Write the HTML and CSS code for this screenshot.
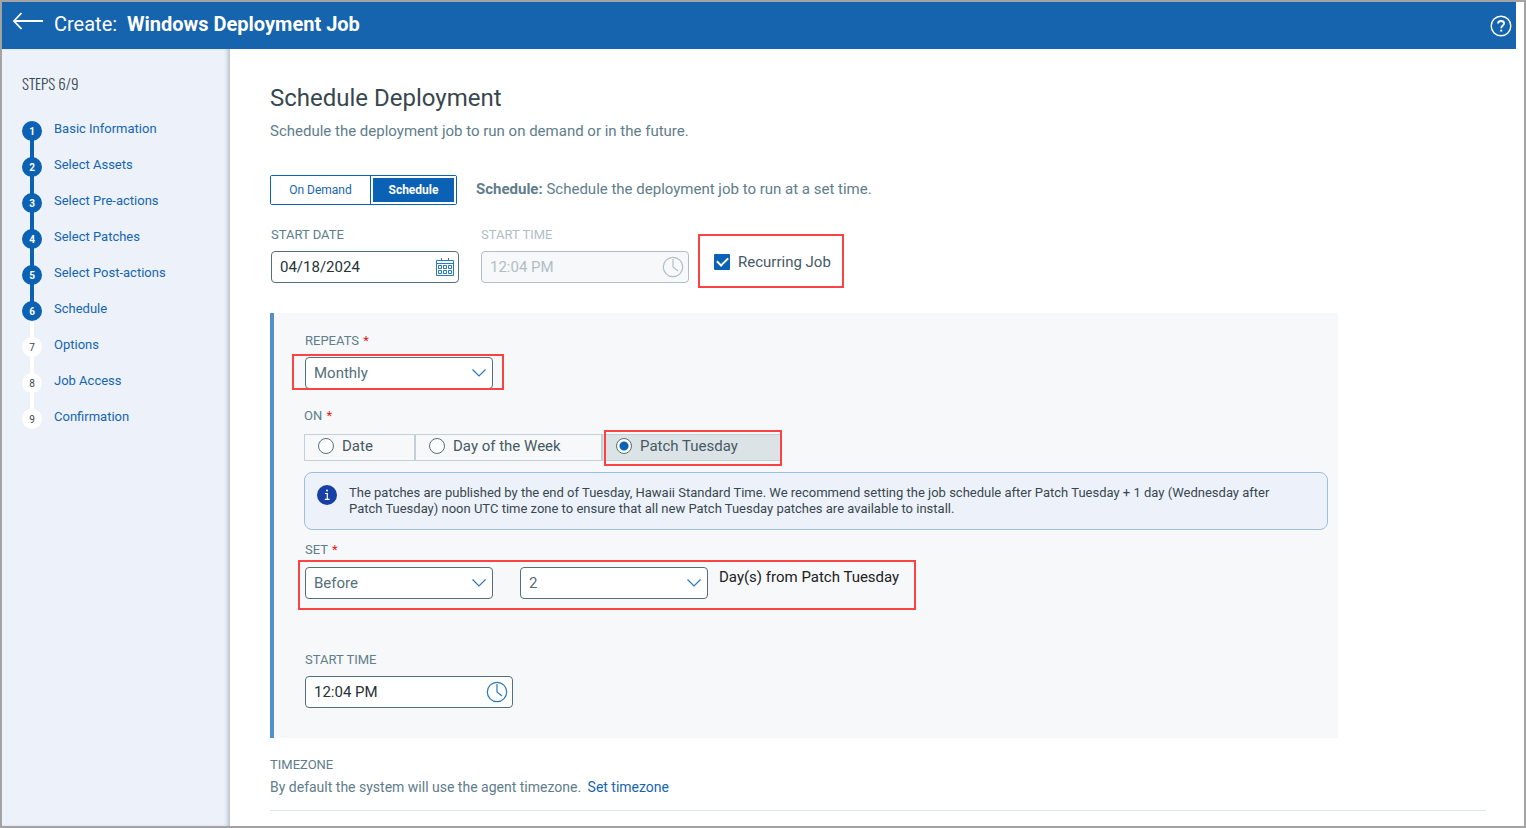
FILE: index.html
```html
<!DOCTYPE html>
<html lang="en">
<head>
    <meta charset="UTF-8">
    <meta name="viewport" content="width=device-width, initial-scale=1.0">
    <title>Create: Windows Deployment Job</title>
    <link rel="stylesheet" href="styles.css">
</head>
<body>
    <header class="topbar">
        <button type="button" class="icon-button" aria-label="Back">
            <svg width="30" height="18" viewBox="0 0 30 18" fill="none" stroke="#fff" stroke-width="1.8"><path d="M8.5 1 L1 9 L8.5 17 M1 9 H30"/></svg>
        </button>
        <h1 class="topbar-title">Create: <strong>Windows Deployment Job</strong></h1>
        <button type="button" class="icon-button help" aria-label="Help">
            <svg width="22" height="22" viewBox="0 0 22 22" fill="none" stroke="#fff"><circle cx="11" cy="11" r="9.8" stroke-width="1.4"/><path d="M8 8.6 C8 6.8 9.3 6 11 6 C12.8 6 14.1 6.9 14.1 8.5 C14.1 10.5 11.2 10.6 11.2 13.2" stroke-width="1.8"/><path d="M10.2 15.6 H12.2" stroke-width="1.8"/></svg>
        </button>
    </header>
    <div class="layout">
        <nav class="sidebar">
            <h2 class="steps-title">STEPS 6/9</h2>
            <ol class="steps">
                <li class="step done"><span class="step-number">1</span><a href="#">Basic Information</a></li>
                <li class="step done"><span class="step-number">2</span><a href="#">Select Assets</a></li>
                <li class="step done"><span class="step-number">3</span><a href="#">Select Pre-actions</a></li>
                <li class="step done"><span class="step-number">4</span><a href="#">Select Patches</a></li>
                <li class="step done"><span class="step-number">5</span><a href="#">Select Post-actions</a></li>
                <li class="step current"><span class="step-number">6</span><a href="#">Schedule</a></li>
                <li class="step"><span class="step-number">7</span><a href="#">Options</a></li>
                <li class="step"><span class="step-number">8</span><a href="#">Job Access</a></li>
                <li class="step"><span class="step-number">9</span><a href="#">Confirmation</a></li>
            </ol>
        </nav>
        <main class="content">
            <h2 class="page-title">Schedule Deployment</h2>
            <p class="subtitle">Schedule the deployment job to run on demand or in the future.</p>

            <div class="mode-row">
                <div class="toggle">
                    <button type="button" class="toggle-button">On Demand</button>
                    <button type="button" class="toggle-button active"><span>Schedule</span></button>
                </div>
                <p class="mode-text"><strong>Schedule:</strong> Schedule the deployment job to run at a set time.</p>
            </div>

            <form>
                <div class="date-row">
                    <div class="field">
                        <label for="start_date">START DATE</label>
                        <div class="control">
                            <input type="text" id="start_date" value="04/18/2024">
                            <svg class="control-icon" width="20" height="20" viewBox="0 0 20 20" fill="none" stroke="#2b78c0"><path d="M1.5 3.5 H18.5 V18.5 H1.5 Z M1.5 6.5 H18.5 M6.5 1 V4 M13.5 1 V4"/><path d="M3.5 8.5 H6.5 V11.5 H3.5 Z M8.5 8.5 H11.5 V11.5 H8.5 Z M13.5 8.5 H16.5 V11.5 H13.5 Z M3.5 13.5 H6.5 V16.5 H3.5 Z M8.5 13.5 H11.5 V16.5 H8.5 Z M13.5 13.5 H16.5 V16.5 H13.5 Z"/></svg>
                        </div>
                    </div>
                    <div class="field disabled">
                        <label for="first_time">START TIME</label>
                        <div class="control wide">
                            <input type="text" id="first_time" value="12:04 PM" disabled>
                            <svg class="control-icon" width="22" height="22" viewBox="0 0 22 22" fill="none" stroke="#b0bec5" stroke-width="1.2"><circle cx="11" cy="11" r="9.7"/><path d="M11 3 V11 L16 15"/></svg>
                        </div>
                    </div>
                    <label class="recurring"><input type="checkbox" class="checkbox" checked>Recurring Job</label>
                </div>

                <section class="panel">
                    <div class="field">
                        <label for="repeats">REPEATS <span class="required">*</span></label>
                        <div class="control marked-select">
                            <select id="repeats"><option>Monthly</option></select>
                            <svg class="control-icon" width="14" height="8" viewBox="0 0 14 8" fill="none" stroke="#2b78c0" stroke-width="1.2"><path d="M0.5 0.5 L7 7 L13.5 0.5"/></svg>
                        </div>
                    </div>

                    <fieldset class="on-group">
                        <legend>ON <span class="required">*</span></legend>
                        <div class="radio-row">
                            <label class="radio-option date"><input type="radio" class="radio" name="on">Date</label>
                            <label class="radio-option weekday"><input type="radio" class="radio" name="on">Day of the Week</label>
                            <label class="radio-option selected"><input type="radio" class="radio" name="on" checked>Patch Tuesday</label>
                        </div>
                    </fieldset>

                    <div class="info">
                        <svg class="info-icon" width="20" height="20" viewBox="0 0 20 20"><circle cx="10" cy="10" r="10" fill="#1740a6"/><path d="M8 8.5 H10.3 V14 M7.8 14.4 H12.6" fill="none" stroke="#fff" stroke-width="1.2"/><circle cx="10" cy="5.6" r="1" fill="#fff"/></svg>
                        <p>The patches are published by the end of Tuesday, Hawaii Standard Time. We recommend setting the job schedule after Patch Tuesday + 1 day (Wednesday after Patch Tuesday) noon UTC time zone to ensure that all new Patch Tuesday patches are available to install.</p>
                    </div>

                    <div class="field">
                        <label for="offset_direction">SET <span class="required">*</span></label>
                        <div class="set-row">
                            <div class="control">
                                <select id="offset_direction"><option>Before</option></select>
                                <svg class="control-icon" width="14" height="8" viewBox="0 0 14 8" fill="none" stroke="#2b78c0" stroke-width="1.2"><path d="M0.5 0.5 L7 7 L13.5 0.5"/></svg>
                            </div>
                            <div class="control">
                                <select id="offset_days"><option>2</option></select>
                                <svg class="control-icon" width="14" height="8" viewBox="0 0 14 8" fill="none" stroke="#2b78c0" stroke-width="1.2"><path d="M0.5 0.5 L7 7 L13.5 0.5"/></svg>
                            </div>
                            <label class="days-label" for="offset_days">Day(s) from Patch Tuesday</label>
                        </div>
                    </div>

                    <div class="field time-field">
                        <label for="start_time">START TIME</label>
                        <div class="control wide">
                            <input type="text" id="start_time" value="12:04 PM">
                            <svg class="control-icon" width="22" height="22" viewBox="0 0 22 22" fill="none" stroke="#2b78c0" stroke-width="1.2"><circle cx="11" cy="11" r="9.7"/><path d="M11 3 V11 L16 15"/></svg>
                        </div>
                    </div>
                </section>
            </form>

            <section class="timezone">
                <h3>TIMEZONE</h3>
                <p>By default the system will use the agent timezone. <a href="#">Set timezone</a></p>
            </section>
        </main>
    </div>
</body>
</html>
```

FILE: styles.css
```css
* {
    box-sizing: border-box;
}
body {
    font-family: Roboto, "Liberation Sans", sans-serif;
    font-size: 15px;
    line-height: 18px;
    margin: 0;
    min-height: 100vh;
    border: 2px solid #a3a3a3;
    background-color: white;
    color: #607d8b;
    display: flex;
    flex-direction: column;
}
h1, h2, h3, p, ol, fieldset {
    margin: 0;
    padding: 0;
    border: none;
    font-weight: normal;
}
a {
    color: #1565b0;
    text-decoration: none;
}
input, select, button {
    font-family: inherit;
    font-size: 15px;
}

/* top bar */
.topbar {
    display: flex;
    align-items: center;
    height: 47px;
    margin-right: 8px;
    padding: 0 4px 4px 11px;
    background-color: #1663ae;
    color: white;
}
.icon-button {
    display: flex;
    padding: 0 0 6px;
    border: none;
    background: none;
    cursor: pointer;
}
.help {
    margin-left: auto;
    padding: 4px 0 0;
}
.topbar-title {
    margin-left: 11px;
    font-size: 20px;
    line-height: 24px;
}
.topbar-title strong {
    margin-left: 5px;
    font-weight: bold;
}

.layout {
    display: flex;
    flex: 1;
}

/* steps */
.sidebar {
    flex: 0 0 228px;
    padding: 25px 20px;
    background-color: #edf2fa;
    box-shadow: inset -4px 0 4px -2px #b4bac2;
}
.steps-title {
    font-family: Oswald, "Roboto Condensed", "Liberation Sans Narrow", "Liberation Sans", sans-serif;
    font-size: 15px;
    font-weight: 300;
    color: #37474f;
}
.steps {
    margin-top: 29px;
    list-style: none;
}
.step {
    position: relative;
    display: flex;
    gap: 12px;
    height: 36px;
    font-size: 13px;
    line-height: 16px;
}
.step::before {
    content: "";
    position: absolute;
    top: 18px;
    left: 8px;
    width: 4px;
    height: 20px;
    background-color: white;
}
.step:last-child::before {
    display: none;
}
.step.done::before {
    background-color: #0b61b3;
}
.step-number {
    position: relative;
    z-index: 1;
    width: 20px;
    height: 20px;
    border-radius: 50%;
    background-color: white;
    color: #37474f;
    font-size: 10px;
    line-height: 21px;
    text-align: center;
}
.step.done .step-number, .step.current .step-number {
    background-color: #0b61b3;
    color: white;
    font-weight: bold;
}

/* content */
.content {
    flex: 1;
    padding: 35px 38px 15px 40px;
}
.page-title {
    font-size: 24px;
    line-height: 28px;
    color: #37474f;
}
.subtitle {
    margin-top: 10px;
}
.mode-row {
    display: flex;
    align-items: center;
    gap: 19px;
    margin-top: 35px;
}
.mode-text {
    padding-bottom: 2px;
}
.toggle {
    display: flex;
    height: 30px;
    border: 1px solid #0b61b3;
    border-radius: 2px;
}
.toggle-button {
    width: 99px;
    padding: 0;
    border: none;
    background: white;
    color: #1565b0;
    font-size: 12px;
    cursor: pointer;
}
.toggle-button.active {
    width: 86px;
    padding: 2px;
    border-left: 1px solid #0b61b3;
    color: white;
    font-weight: bold;
}
.toggle-button.active span {
    display: block;
    background-color: #0b61b3;
    line-height: 24px;
}
.date-row {
    display: flex;
    align-items: flex-end;
    gap: 20px;
    margin-top: 22px;
    padding-bottom: 5px;
}
.field {
    margin: 0 1px;
}
.field > label, legend, .timezone h3 {
    display: block;
    padding: 0;
    font-size: 13px;
    line-height: 16px;
}
.required {
    margin-left: 1px;
    color: #e02020;
}
.control {
    position: relative;
    width: 188px;
    margin-top: 8px;
}
.control.wide {
    width: 208px;
}
.control input, .control select {
    display: block;
    appearance: none;
    width: 100%;
    height: 32px;
    padding: 0 8px;
    border: 1px solid #546e7a;
    border-radius: 4px;
    background-color: white;
    color: #263238;
}
.control select {
    color: #546e7a;
}
.control-icon {
    position: absolute;
    top: 0;
    bottom: 0;
    right: 4px;
    margin: auto;
    pointer-events: none;
}
.wide .control-icon {
    right: 5px;
}
select + .control-icon {
    right: 7px;
}
.disabled label, .disabled .control input {
    color: #b0bec5;
}
.disabled .control input {
    border-color: #b0bec5;
    background-color: #f7f8fa;
}
.recurring {
    display: flex;
    align-items: center;
    gap: 8px;
    height: 54px;
    margin: 0 0 -5px -12px;
    padding: 2px 11px 0 14px;
    border: 2px solid #fa4444;
    color: #455a64;
}
.checkbox {
    appearance: none;
    display: grid;
    place-items: center;
    width: 16px;
    height: 16px;
    margin: 0;
    border-radius: 1px;
    background-color: #0b61b3;
}
.checkbox:checked::before {
    content: "";
    width: 9px;
    height: 5px;
    margin-bottom: 3px;
    border-left: 2px solid white;
    border-bottom: 2px solid white;
    transform: rotate(-45deg);
}

/* recurrence panel */
.panel {
    max-width: 1068px;
    margin-top: 25px;
    padding: 20px 10px 30px 30px;
    border-left: 4px solid #5191c9;
    background-color: #f7f8fa;
}
.marked-select::after {
    content: "";
    position: absolute;
    top: -3px;
    right: -11px;
    bottom: -1px;
    left: -13px;
    border: 2px solid #fa4444;
    pointer-events: none;
}
.on-group {
    margin-top: 19px;
}
.radio-row {
    display: flex;
    margin-top: 10px;
}
.radio-option {
    position: relative;
    display: flex;
    gap: 8px;
    height: 27px;
    padding: 3px 0 0 13px;
    border: 1px solid #c5d0d6;
    color: #455a64;
    line-height: 16px;
}
.date {
    width: 111px;
}
.weekday {
    width: 187px;
}
.selected {
    width: 179px;
    background-color: #dce3e6;
}
.selected::after {
    content: "";
    position: absolute;
    inset: -5px -2px -6px 1px;
    border: 2px solid #fa4444;
    pointer-events: none;
}
.radio {
    appearance: none;
    width: 16px;
    height: 16px;
    margin: 0;
    border: 1px solid #546e7a;
    border-radius: 50%;
    background-color: white;
}
.radio:checked {
    background: radial-gradient(circle, #0b61b3 4px, white 5px);
}
.info {
    display: flex;
    gap: 12px;
    margin-top: 11px;
    margin-bottom: 12px;
    padding: 12px;
    border: 1px solid #9bbfe0;
    border-radius: 8px;
    background-color: #edf2fa;
    color: #37474f;
    font-size: 13px;
    line-height: 16px;
}
.info-icon {
    flex: none;
}
.info p {
    max-width: 940px;
}
.set-row {
    position: relative;
    display: flex;
    gap: 27px;
    width: max-content;
    margin-top: 9px;
}
.set-row .control {
    margin: 0;
}
.set-row::after {
    content: "";
    position: absolute;
    inset: -7px -17px -11px -7px;
    border: 2px solid #fa4444;
    pointer-events: none;
}
.days-label {
    margin-left: -16px;
    color: #212121;
    line-height: 20px;
}
.time-field {
    margin-top: 53px;
}

.timezone {
    margin-top: 19px;
    padding-bottom: 14px;
    border-bottom: 1px solid #dbe4e9;
}
.timezone p {
    margin-top: 5px;
    font-size: 14px;
}
.timezone a {
    margin-left: 3px;
}
```
